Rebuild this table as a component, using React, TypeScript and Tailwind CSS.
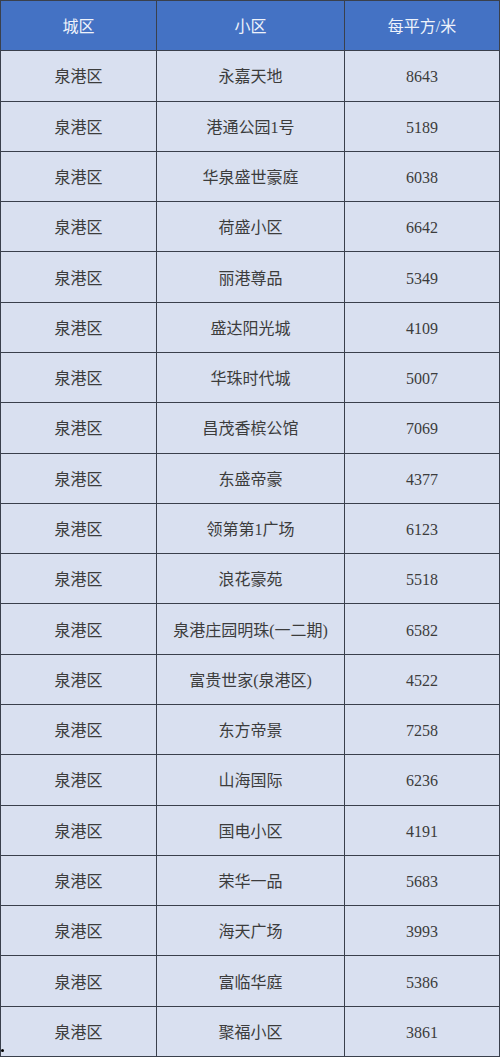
const rows: [string, string, number][] = [
  ['泉港区', '永嘉天地', 8643],
  ['泉港区', '港通公园1号', 5189],
  ['泉港区', '华泉盛世豪庭', 6038],
  ['泉港区', '荷盛小区', 6642],
  ['泉港区', '丽港尊品', 5349],
  ['泉港区', '盛达阳光城', 4109],
  ['泉港区', '华珠时代城', 5007],
  ['泉港区', '昌茂香槟公馆', 7069],
  ['泉港区', '东盛帝豪', 4377],
  ['泉港区', '领第第1广场', 6123],
  ['泉港区', '浪花豪苑', 5518],
  ['泉港区', '泉港庄园明珠(一二期)', 6582],
  ['泉港区', '富贵世家(泉港区)', 4522],
  ['泉港区', '东方帝景', 7258],
  ['泉港区', '山海国际', 6236],
  ['泉港区', '国电小区', 4191],
  ['泉港区', '荣华一品', 5683],
  ['泉港区', '海天广场', 3993],
  ['泉港区', '富临华庭', 5386],
  ['泉港区', '聚福小区', 3861],
];

const headers = ['城区', '小区', '每平方/米'];

export default function App() {
  return (
    <div className="relative h-[1057px] w-[500px] bg-white font-['Liberation_Serif','Noto_Sans_CJK_SC',serif] text-[16px]">
      <div className="grid h-full w-full grid-cols-[155px_187px_1fr] grid-rows-[repeat(21,minmax(0,1fr))] gap-px bg-[#3a404c] p-px">
        {headers.map((h) => (
          <div key={h} className="flex items-center justify-center bg-[#4472c4] pt-[2px] text-[#eef2fb]">
            {h}
          </div>
        ))}
        {rows.map(([district, name, price], i) => (
          <div key={i} className="contents">
            <div className="flex items-center justify-center bg-[#d9e0f0] pt-[3px] text-[#3c3c3c]">{district}</div>
            <div className="flex items-center justify-center bg-[#d9e0f0] pt-[3px] text-[#3c3c3c]">{name}</div>
            <div className="flex items-center justify-center bg-[#d9e0f0] pt-[3px] text-[#3c3c3c]">{price}</div>
          </div>
        ))}
      </div>
      <span className="absolute left-[1px] top-[1049px] h-[3px] w-[3px] rounded-full bg-black" />
    </div>
  );
}
